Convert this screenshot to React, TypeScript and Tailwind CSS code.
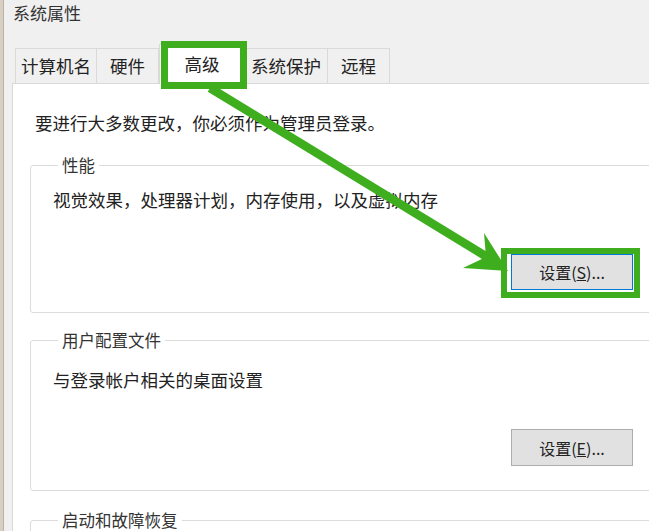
import * as React from "react";

const font = { fontFamily: '"Noto Sans CJK SC", "Noto Sans", sans-serif' };

const tabs = [
  { label: "计算机名", w: "w-[82px]" },
  { label: "硬件", w: "w-[63px]" },
  { label: "高级", w: "w-[86px]", active: true },
  { label: "系统保护", w: "w-[84px]" },
  { label: "远程", w: "w-[63px]" },
];

function Button({ children, focused }: { children: React.ReactNode; focused?: boolean }) {
  return (
    <button
      type="button"
      className={
        focused
          ? "ml-[458px] flex h-[36px] w-[122px] items-center justify-center border border-[#0078d7] bg-[#e1e1e1] text-[16px] text-[#222]"
          : "ml-[458px] flex h-[37px] w-[122px] items-center justify-center border border-[#adadad] bg-[#e1e1e1] text-[16px] text-[#222]"
      }
    >
      {children}
    </button>
  );
}

function Group({
  title,
  children,
  className,
}: {
  title: string;
  children?: React.ReactNode;
  className?: string;
}) {
  return (
    <fieldset className={"ml-[17px] w-[660px] rounded-[3px] border border-[#dcdcdc] px-[22px] " + (className ?? "")}>
      <legend className="ml-[5px] px-[4px] text-[16.5px] leading-[24px] text-[#333]">{title}</legend>
      {children}
    </fieldset>
  );
}

export default function App() {
  return (
    <div className="relative h-[531px] w-[649px] overflow-hidden bg-[#f0f0f0] text-[#222]" style={font}>
      <div className="flex h-full">
        {/* window frame edge */}
        <div className="w-[3px] shrink-0 bg-[#d6cfc2]" />
        <div className="w-px shrink-0 bg-[#b8b2a8]" />

        <div className="flex-1">
          <div className="h-[44px] pl-[9px] pt-[1px] text-[17px] leading-[24px] text-[#333]">系统属性</div>

          <div className="ml-[8px]">
            {/* tab strip */}
            <div className="relative z-10 flex h-[39px] items-end pl-[3px]">
              {tabs.map((t) =>
                t.active ? (
                  <div
                    key={t.label}
                    className={`${t.w} -mb-px flex h-[40px] items-center justify-center border border-b-0 border-[#d9d9d9] bg-white text-[17.5px]`}
                  >
                    {t.label}
                  </div>
                ) : (
                  <div
                    key={t.label}
                    className={`${t.w} -ml-px flex h-[35px] items-center justify-center border border-b-0 border-[#d9d9d9] bg-[#f0f0f0] text-[17.5px] first:ml-0`}
                  >
                    {t.label}
                  </div>
                )
              )}
            </div>

            {/* tab panel */}
            <div className="h-[460px] w-[700px] border border-[#d9d9d9] bg-white pt-[27px]">
              <p className="ml-[22px] text-[17.5px] leading-[24px]">要进行大多数更改，你必须作为管理员登录。</p>

              <Group title="性能" className="mt-[18px] pb-[22px]">
                <p className="mt-[11px] text-[17.5px] leading-[24px]">视觉效果，处理器计划，内存使用，以及虚拟内存</p>
                <div className="mt-[42px]">
                  <Button focused>
                    设置(<span className="underline">S</span>)...
                  </Button>
                </div>
              </Group>

              <Group title="用户配置文件" className="mt-[15px] pb-[24px]">
                <p className="mt-[16px] text-[17.5px] leading-[24px]">与登录帐户相关的桌面设置</p>
                <div className="mt-[37px]">
                  <Button>
                    设置(<span className="underline">E</span>)...
                  </Button>
                </div>
              </Group>

              <Group title="启动和故障恢复" className="mt-[17px] h-[60px]" />
            </div>
          </div>
        </div>
      </div>

      {/* green annotation overlay */}
      <svg className="pointer-events-none absolute inset-0 z-20" width="649" height="531" viewBox="0 0 649 531">
        <g stroke="#3fae1e" fill="none">
          <rect x="164.5" y="44.5" width="79" height="41" strokeWidth="7" />
          <rect x="504" y="251" width="133" height="44" strokeWidth="6" />
          <line x1="210" y1="88" x2="487" y2="257" strokeWidth="8.5" />
        </g>
        <polygon points="508,271 484,233 486,257 463,268" fill="#3fae1e" />
      </svg>
    </div>
  );
}
